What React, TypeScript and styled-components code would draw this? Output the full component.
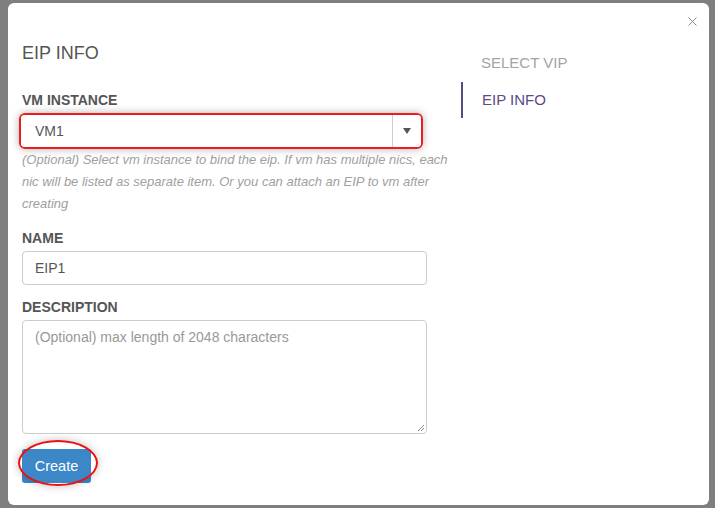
import React from "react";
import styled, { createGlobalStyle } from "styled-components";

const GlobalStyle = createGlobalStyle`
  html, body {
    margin: 0;
    padding: 0;
    background: #7f7f7f;
    font-family: "Liberation Sans", Arial, sans-serif;
  }
`;

const Backdrop = styled.div`
  width: 715px;
  height: 508px;
  padding: 3px 6px 3px 8px;
  box-sizing: border-box;
`;

const Modal = styled.div`
  position: relative;
  width: 701px;
  height: 502px;
  background: #fff;
  border-radius: 6px;
  box-sizing: border-box;
  padding: 40px 14px 0 14px;
  display: flex;
`;

const Close = styled.button`
  position: absolute;
  top: 11px;
  right: 10px;
  width: 14px;
  height: 14px;
  padding: 0;
  border: none;
  background: none;
  display: flex;
  align-items: center;
  justify-content: center;
`;

const FormColumn = styled.div`
  width: 405px;
  display: flex;
  flex-direction: column;
`;

const Title = styled.h3`
  margin: 0 0 29px;
  font-size: 18px;
  line-height: 20px;
  font-weight: normal;
  color: #555;
`;

const Label = styled.label`
  display: block;
  margin-bottom: 5px;
  font-size: 14px;
  line-height: 16px;
  font-weight: bold;
  color: #555;
`;

const Field = styled.div<{ $gap?: number }>`
  margin-bottom: ${(p) => p.$gap ?? 16}px;
`;

const Highlight = styled.div`
  position: relative;
  margin-left: -3px;
  width: 400px;
  border: 2px solid #ee1c1c;
  border-radius: 6px;
  box-shadow: 0 0 8px rgba(0, 0, 0, 0.3);
`;

const Select = styled.div`
  display: flex;
  height: 32px;
  background: #fff;
  border-radius: 4px;
`;

const SelectValue = styled.div`
  flex: 1;
  padding-left: 14px;
  font-size: 14px;
  line-height: 32px;
  color: #555;
`;

const SelectArrow = styled.div`
  width: 28px;
  border-left: 1px solid #ccc;
  display: flex;
  align-items: center;
  justify-content: center;
`;

const Help = styled.p`
  margin: 0 -28px 0 0;
  font-size: 13px;
  line-height: 22px;
  font-style: italic;
  color: #a0a0a0;
`;

const Input = styled.div`
  height: 32px;
  border: 1px solid #ccc;
  border-radius: 4px;
  padding: 0 12px;
  font-size: 14px;
  line-height: 32px;
  color: #555;
`;

const TextArea = styled.div`
  position: relative;
  height: 114px;
  border: 1px solid #ccc;
  border-radius: 4px;
  padding: 6px 12px;
  box-sizing: border-box;
  font-size: 14px;
  line-height: 20px;
  color: #999;
`;

const Grip = styled.svg`
  position: absolute;
  right: 1px;
  bottom: 1px;
`;

const ButtonWrap = styled.div`
  position: relative;
  margin-top: 15px;
  align-self: flex-start;
`;

const Button = styled.button`
  width: 69px;
  height: 34px;
  border: none;
  border-radius: 3px;
  background: #3c87c8;
  color: #fff;
  font-family: "Liberation Sans", Arial, sans-serif;
  font-size: 14.5px;
  padding: 0;
`;

const Ring = styled.div`
  position: absolute;
  left: -4px;
  top: -9px;
  width: 76px;
  height: 42px;
  border: 2px solid #ee1010;
  border-radius: 50%;
  box-shadow: 0 0 8px rgba(0, 0, 0, 0.25);
`;

const Steps = styled.nav`
  margin-left: 34px;
  padding-top: 11px;
  display: flex;
  flex-direction: column;
`;

const Step = styled.div<{ $active?: boolean }>`
  border-left: 2px solid ${(p) => (p.$active ? "#5b4a86" : "transparent")};
  padding: ${(p) => (p.$active ? "9px 0 9px 19px" : "0 0 0 18px")};
  margin-top: ${(p) => (p.$active ? "10px" : "0")};
  font-size: 15px;
  line-height: 18px;
  color: ${(p) => (p.$active ? "#5b4a86" : "#a3a3a3")};
`;

export default function App() {
  return (
    <>
      <GlobalStyle />
      <Backdrop>
        <Modal>
          <Close aria-label="close">
            <svg width="9" height="9" viewBox="0 0 9 9">
              <path d="M0.5 0.5 L8.5 8.5 M8.5 0.5 L0.5 8.5" stroke="#8a8a8a" strokeWidth="1" />
            </svg>
          </Close>
          <FormColumn>
            <Title>EIP INFO</Title>
            <Field $gap={15}>
              <Label>VM INSTANCE</Label>
              <Highlight>
                <Select>
                  <SelectValue>VM1</SelectValue>
                  <SelectArrow>
                    <svg width="8" height="6" viewBox="0 0 8 6">
                      <path d="M0 0 H8 L4 6 Z" fill="#555" />
                    </svg>
                  </SelectArrow>
                </Select>
              </Highlight>
              <Help>
                (Optional) Select vm instance to bind the eip. If vm has multiple nics, each nic
                will be listed as separate item. Or you can attach an EIP to vm after creating
              </Help>
            </Field>
            <Field $gap={14}>
              <Label>NAME</Label>
              <Input>EIP1</Input>
            </Field>
            <Field $gap={0}>
              <Label>DESCRIPTION</Label>
              <TextArea>
                (Optional) max length of 2048 characters
                <Grip width="9" height="9" viewBox="0 0 9 9">
                  <path d="M8 2 L2 8 M8 5 L5 8" stroke="#888" strokeWidth="1" />
                </Grip>
              </TextArea>
            </Field>
            <ButtonWrap>
              <Button>Create</Button>
              <Ring />
            </ButtonWrap>
          </FormColumn>
          <Steps>
            <Step>SELECT VIP</Step>
            <Step $active>EIP INFO</Step>
          </Steps>
        </Modal>
      </Backdrop>
    </>
  );
}
